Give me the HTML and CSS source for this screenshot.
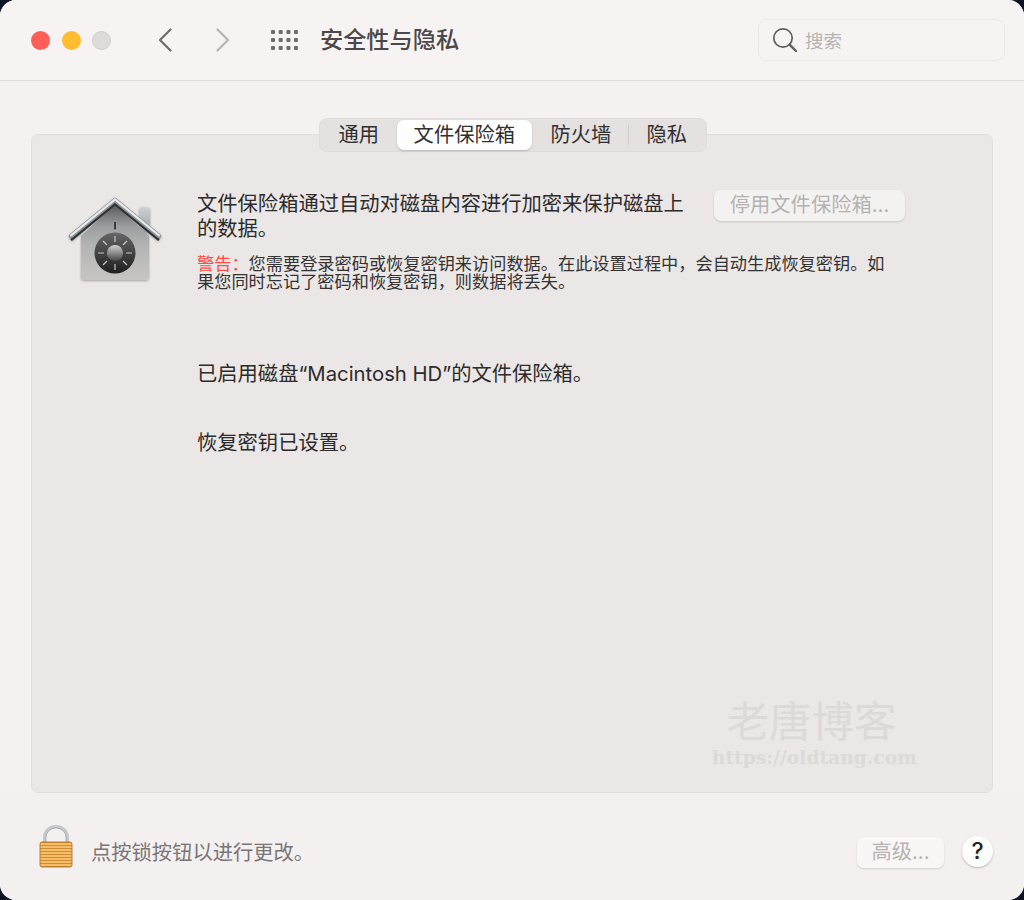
FILE: index.html
```html
<!DOCTYPE html>
<html lang="zh-CN">

<head>
  <meta charset="UTF-8">
  <meta name="viewport" content="width=device-width, initial-scale=1.0">
  <title>安全性与隐私</title>
  <link rel="stylesheet" href="styles.css">
</head>

<body>
  <div class="window">
    <header class="toolbar">
      <div class="lights">
        <span class="light light-red"></span>
        <span class="light light-yellow"></span>
        <span class="light light-off"></span>
      </div>
      <div class="nav">
        <svg width="14" height="24" viewBox="0 0 14 24"><path d="M12.5 1.5 2 12l10.5 10.5" fill="none" stroke="#6f6b6b" stroke-width="2.2" stroke-linecap="round" stroke-linejoin="round"/></svg>
        <svg width="14" height="24" viewBox="0 0 14 24"><path d="M1.5 1.5 12 12 1.5 22.5" fill="none" stroke="#b7b3b3" stroke-width="2.2" stroke-linecap="round" stroke-linejoin="round"/></svg>
      </div>
      <svg class="grid-icon" width="27" height="20" viewBox="0 0 27 20" fill="#6f6b6b">
        <rect x="0" y="0" width="4" height="4" rx="1"/><rect x="7.7" y="0" width="4" height="4" rx="1"/><rect x="15.4" y="0" width="4" height="4" rx="1"/><rect x="23" y="0" width="4" height="4" rx="1"/>
        <rect x="0" y="8" width="4" height="4" rx="1"/><rect x="7.7" y="8" width="4" height="4" rx="1"/><rect x="15.4" y="8" width="4" height="4" rx="1"/><rect x="23" y="8" width="4" height="4" rx="1"/>
        <rect x="0" y="16" width="4" height="4" rx="1"/><rect x="7.7" y="16" width="4" height="4" rx="1"/><rect x="15.4" y="16" width="4" height="4" rx="1"/><rect x="23" y="16" width="4" height="4" rx="1"/>
      </svg>
      <h1 class="title">安全性与隐私</h1>
      <div class="search">
        <svg width="26" height="26" viewBox="0 0 26 26"><circle cx="11" cy="11" r="9.2" fill="none" stroke="#5f5c5c" stroke-width="1.7"/><path d="M17.6 17.6 24 24" fill="none" stroke="#5f5c5c" stroke-width="2.4" stroke-linecap="round"/></svg>
        <span>搜索</span>
      </div>
    </header>

    <main class="content">
      <div class="tabs">
        <span class="tab tab-first">通用</span>
        <span class="tab tab-active">文件保险箱</span>
        <span class="tab tab-sep">防火墙</span>
        <span class="tab tab-last">隐私</span>
      </div>

      <section class="panel">
        <svg class="house" width="100" height="100" viewBox="0 0 100 100">
          <defs>
            <linearGradient id="wall" x1="0" y1="0" x2="0" y2="1">
              <stop offset="0" stop-color="#55585a"/>
              <stop offset="0.3" stop-color="#9c9e9f"/>
              <stop offset="0.55" stop-color="#b4b4b4"/>
              <stop offset="1" stop-color="#c6c5c3"/>
            </linearGradient>
            <linearGradient id="chimney" x1="0" y1="0" x2="0" y2="1">
              <stop offset="0" stop-color="#cdd2d5"/>
              <stop offset="1" stop-color="#9a9ea1"/>
            </linearGradient>
            <linearGradient id="dial" x1="0" y1="0" x2="0" y2="1">
              <stop offset="0" stop-color="#666"/>
              <stop offset="1" stop-color="#1f1f1f"/>
            </linearGradient>
            <linearGradient id="knob" x1="0" y1="0" x2="0" y2="1">
              <stop offset="0" stop-color="#d2d2d2"/>
              <stop offset="1" stop-color="#444"/>
            </linearGradient>
            <filter id="soft" x="-10%" y="-10%" width="120%" height="125%">
              <feDropShadow dx="0" dy="1" stdDeviation="1" flood-color="#000" flood-opacity="0.3"/>
            </filter>
          </defs>
          <g filter="url(#soft)">
            <rect x="74" y="17" width="11" height="26" rx="3" fill="url(#chimney)"/>
            <path d="M16 46 50 14l34 32v41a3 3 0 0 1-3 3H19a3 3 0 0 1-3-3z" fill="url(#wall)"/>
            <path d="M6 47 50 11l44 36" fill="none" stroke="#2f3235" stroke-width="2.6" stroke-linejoin="round" transform="translate(0 3)"/>
            <path d="M6 46 50 10l44 36" fill="none" stroke="#8d9296" stroke-width="4.6" stroke-linecap="round" stroke-linejoin="round"/>
            <path d="M6 45.4 50 9.4l44 36" fill="none" stroke="#e6eaec" stroke-width="2.2" stroke-linecap="round" stroke-linejoin="round"/>
          </g>
          <rect x="48.5" y="31" width="3" height="9" rx="1.5" fill="#3b3b3b" stroke="#c8c8c8" stroke-width="0.6"/>
          <circle cx="50" cy="63" r="20.5" fill="url(#dial)"/>
          <g stroke="#c6c6c6" stroke-width="1.2">
            <path d="M50 46v6M50 74v6M33 63h6M61 63h6M38 51l4 4M62 51l-4 4M38 75l4-4M62 75l-4-4"/>
          </g>
          <circle cx="50" cy="63" r="8" fill="url(#knob)"/>
        </svg>

        <div class="body">
          <div class="intro">
            <p class="text">文件保险箱通过自动对磁盘内容进行加密来保护磁盘上的数据。</p>
            <span class="btn btn-disable">停用文件保险箱...</span>
          </div>
          <p class="warning"><span class="warning-label">警告：</span>您需要登录密码或恢复密钥来访问数据。在此设置过程中，会自动生成恢复密钥。如果您同时忘记了密码和恢复密钥，则数据将丢失。</p>
          <p class="status status-disk">已启用磁盘“Macintosh HD”的文件保险箱。</p>
          <p class="status status-key">恢复密钥已设置。</p>
        </div>

        <div class="watermark">
          <div class="watermark-name">老唐博客</div>
          <div class="watermark-url">https://oldtang.com</div>
        </div>
      </section>
    </main>

    <footer class="bottom">
      <svg class="lock" width="34" height="43" viewBox="0 0 34 43">
        <defs>
          <pattern id="bands" width="4" height="3" patternUnits="userSpaceOnUse">
            <rect width="4" height="3" fill="#f4bd66"/>
            <rect y="2" width="4" height="1" fill="#cf8d35"/>
          </pattern>
        </defs>
        <path d="M5.5 18V12a11.5 10.5 0 0 1 23 0v6" fill="none" stroke="#c3c8cc" stroke-width="3"/>
        <path d="M7 18V12a10 9 0 0 1 20 0v6" fill="none" stroke="#8f9498" stroke-width="0.6"/>
        <rect x="1" y="17" width="32" height="25" rx="2" fill="url(#bands)" stroke="#a8692a" stroke-width="0.8"/>
      </svg>
      <span class="hint">点按锁按钮以进行更改。</span>
      <span class="btn btn-advanced">高级...</span>
      <span class="help">?</span>
    </footer>
  </div>
</body>

</html>
```

FILE: styles.css
```css
html,
body {
  height: 100%;
}

body {
  margin: 0;
  background-color: #0d1424;
  font-family: Inter, "Noto Sans CJK SC", sans-serif;
  font-size: 20.3px;
  color: #2c2b2b;
  overflow: hidden;
}

.window {
  display: flex;
  flex-direction: column;
  height: 900px;
  background-color: #f6f1f1;
  border-radius: 16px;
  overflow: hidden;
}

/* Toolbar */
.toolbar {
  display: flex;
  align-items: center;
  height: 80px;
  flex-shrink: 0;
  padding: 0 19px 0 31px;
  background-color: #f8f3f3;
  border-bottom: 1px solid #dfdbdb;
}

.lights {
  display: flex;
  gap: 11.5px;
}

.light {
  width: 19px;
  height: 19px;
  border-radius: 50%;
  box-sizing: border-box;
}

.light-red {
  background-color: #ff5f57;
}

.light-yellow {
  background-color: #febc2e;
}

.light-off {
  background-color: #dfdbdb;
  border: 1px solid #d0cccc;
}

.nav {
  display: flex;
  gap: 44px;
  margin-left: 47px;
}

.grid-icon {
  margin-left: 41px;
}

.title {
  margin: -5px 0 0 22px;
  font-size: 23.2px;
  font-weight: 500;
  color: #4a4848;
}

.search {
  display: flex;
  align-items: center;
  gap: 7px;
  width: 247px;
  height: 42px;
  margin-left: auto;
  padding-left: 13px;
  box-sizing: border-box;
  border: 1px solid #ebe7e7;
  border-radius: 9px;
  font-size: 18.5px;
  color: #b6b3b3;
}

/* Tabs and panel */
.content {
  flex: 1;
  display: flex;
  flex-direction: column;
  align-items: center;
  padding: 37px 31px 0;
  min-height: 0;
}

.tabs {
  position: relative;
  z-index: 1;
  display: flex;
  align-items: center;
  height: 34px;
  flex-shrink: 0;
  margin-bottom: -18px;
  margin-left: 2px;
  box-sizing: border-box;
  border: 1px solid #dfdbdb;
  border-radius: 8px;
  background-color: #e5e1e1;
}

.tab {
  position: relative;
  height: 30px;
  padding: 0 18px;
  line-height: 30px;
  color: #302f2f;
}

.tab-first {
  padding-left: 19px;
}

.tab-last {
  padding-right: 19.5px;
}

.tab-active {
  padding: 0 16.5px;
  background-color: #fff;
  border-radius: 7px;
  box-shadow: 0 1px 2px rgba(0, 0, 0, 0.2);
}

.tab-sep {
  padding: 0 17px 0 19px;
  border-right: 1px solid #cfcbcb;
  height: 20px;
  line-height: 20px;
  margin-right: -1px;
}

.panel {
  position: relative;
  display: flex;
  align-items: flex-start;
  align-self: stretch;
  flex-shrink: 0;
  height: 659px;
  padding: 55px 0 0 33px;
  box-sizing: border-box;
  background-color: #ebe7e6;
  border: 1px solid #e3dfde;
  border-radius: 7px;
}

.house {
  flex-shrink: 0;
}

.body {
  margin-left: 32px;
}

.intro {
  display: flex;
  align-items: flex-start;
  justify-content: space-between;
  width: 708px;
}

.text {
  width: 490px;
  margin: 1px 0 0;
  line-height: 25px;
}

.btn {
  height: 31px;
  line-height: 29px;
  box-sizing: border-box;
  text-align: center;
  border-radius: 7px;
  color: #b5b3b2;
  background-color: #f4f2f1;
  box-shadow: 0 1px 2px rgba(0, 0, 0, 0.15);
}

.btn-disable {
  width: 191px;
}

.warning {
  width: 695px;
  margin: 14px 0 0;
  font-size: 17.2px;
  line-height: 18px;
  color: #333;
}

.warning-label {
  color: #ff4a45;
}

.status {
  margin: 0;
  line-height: 25px;
}

.status-disk {
  margin-top: 70px;
}

.status-key {
  margin-top: 44px;
}

.watermark {
  position: absolute;
  right: 75px;
  bottom: 24px;
  text-align: center;
  color: #dbdad8;
}

.watermark-name {
  margin-right: 6px;
  font-size: 42.5px;
  line-height: 48px;
}

.watermark-url {
  font-family: "DejaVu Serif", serif;
  font-weight: 700;
  font-size: 18.7px;
  line-height: 22px;
}

/* Bottom bar */
.bottom {
  display: flex;
  align-items: center;
  flex-shrink: 0;
  height: 107px;
  padding: 9px 31px 0 39px;
  box-sizing: border-box;
  background-color: #f5f0f0;
}

.lock {
  margin-bottom: 9px;
}

.hint {
  margin-left: 18px;
  color: #787676;
}

.btn-advanced {
  width: 87px;
  margin-top: 2px;
  margin-left: auto;
  background-color: #f9f7f6;
}

.help {
  width: 31px;
  height: 31px;
  margin-left: 18px;
  border-radius: 50%;
  background-color: #fff;
  box-shadow: 0 1px 2px rgba(0, 0, 0, 0.25);
  text-align: center;
  line-height: 30px;
  font-size: 23px;
  font-weight: 500;
  color: #222;
}
```
